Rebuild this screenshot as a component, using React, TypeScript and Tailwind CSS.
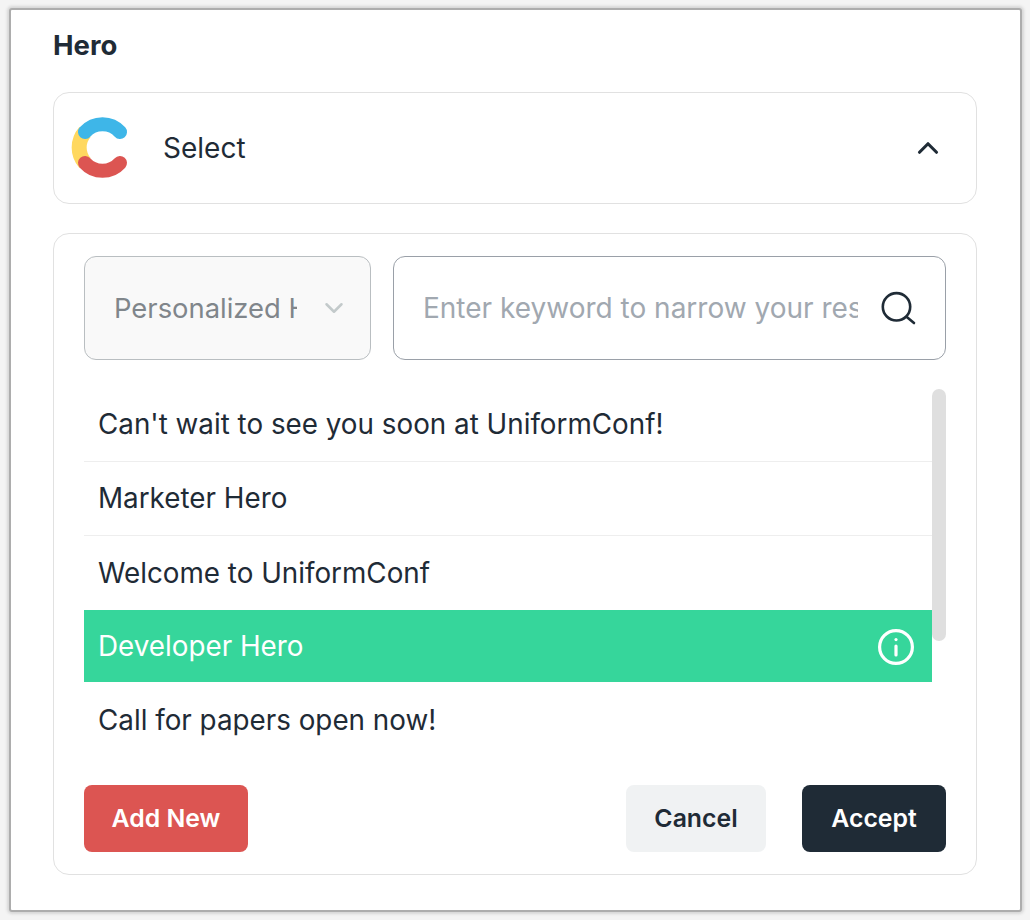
import { ChevronDown, ChevronUp } from "lucide-react";

const entries = [
  { title: "Can't wait to see you soon at UniformConf!", rowClass: "h-[74px] border-b border-[#eeeeee] pt-px" },
  { title: "Marketer Hero", rowClass: "h-[74px] border-b border-[#eeeeee]" },
  { title: "Welcome to UniformConf", rowClass: "h-[74px] pt-px" },
  { title: "Developer Hero", selected: true, rowClass: "h-[72px] justify-between bg-[#36d69b] pr-[18px] pt-[2px] text-white" },
  { title: "Call for papers open now!", rowClass: "h-[78px]" },
];

function ContentfulLogo() {
  return (
    <svg width="60" height="64" viewBox="0 -1 60 64" fill="none" className="shrink-0">
      <path d="M14 15 A23.5 23.5 0 0 0 14 46" stroke="#ffd85f" strokeWidth="15" />
      <path d="M14 15 A23.5 23.5 0 0 1 49 15" stroke="#3eb6e8" strokeWidth="14" strokeLinecap="round" />
      <path d="M14 46 A23.5 23.5 0 0 0 49 46" stroke="#dc5552" strokeWidth="14" strokeLinecap="round" />
    </svg>
  );
}

function SearchIcon() {
  return (
    <svg width="36" height="36" viewBox="0 0 36 36" fill="none" stroke="#1f2b36" strokeWidth="2.6" strokeLinecap="round">
      <circle cx="16.5" cy="16.8" r="13.7" />
      <path d="M26.8 27 L34 33" />
    </svg>
  );
}

function InfoIcon() {
  return (
    <svg width="36" height="36" viewBox="0 0 36 36" fill="none" stroke="#fff" strokeWidth="3.2" strokeLinecap="round">
      <circle cx="18" cy="18" r="16.4" />
      <path d="M18 17 V26" />
      <path d="M18 10.5 V10.6" />
    </svg>
  );
}

export default function App() {
  return (
    <div className="h-[920px] w-[1030px] overflow-hidden bg-[#f4f4f4] pl-[9px] pt-[8px] font-['Inter',sans-serif] text-[#1f2b36]">
      <div className="h-[904px] w-[1013px] rounded-[3px] border-2 border-[#adadad] bg-white pl-[42px] pr-[43px] pt-[18px] shadow-[0_0_3px_2px_#d6d6d6]">
        <h1 className="text-[27.5px] font-bold leading-[34px]">Hero</h1>

        <div className="mt-[30px] flex h-[112px] items-center rounded-2xl border border-[#e1e1e1] pl-[17px] pr-[31px]">
          <ContentfulLogo />
          <span className="ml-[32px] flex-1 pb-px text-[28px]">Select</span>
          <ChevronUp size={34} strokeWidth={2.2} />
        </div>

        <div className="mt-[29px] flex h-[642px] flex-col rounded-2xl border border-[#e1e1e1] px-[30px] pt-[22px]">
          <div className="flex h-[104px] gap-[22px]">
            <div className="flex w-[287px] items-center rounded-xl border border-[#b9bec1] bg-[#f9f9f9] pl-[29px] pr-[21px]">
              <span className="w-[183px] overflow-hidden whitespace-nowrap pt-px text-[27.4px] text-[#80868b]">Personalized Hero</span>
              <ChevronDown size={30} strokeWidth={2} className="ml-auto text-[#c3cacb]" />
            </div>
            <div className="flex flex-1 items-center rounded-xl border border-[#9aa0a8] pl-[29px] pr-[29px]">
              <span className="w-[435px] overflow-hidden whitespace-nowrap text-[28px] text-[#a1a8b0]">Enter keyword to narrow your results</span>
              <div className="ml-auto"><SearchIcon /></div>
            </div>
          </div>

          <div className="mt-[28px] flex h-[370px]">
            <ul className="w-[848px]">
              {entries.map((entry) => (
                <li key={entry.title} className={`flex items-center pl-[14px] text-[27.8px] ${entry.rowClass}`}>
                  {entry.title}
                  {entry.selected ? <InfoIcon /> : null}
                </li>
              ))}
            </ul>
            <div className="mt-px h-[252px] w-[14px] rounded-full bg-[#dfdfdf]" />
          </div>

          <div className="mt-[27px] flex h-[67px] items-stretch text-[24.8px] font-semibold">
            <button className="w-[164px] rounded-lg bg-[#dc5552] text-white">Add New</button>
            <button className="ml-auto w-[140px] rounded-lg bg-[#f0f2f3]">Cancel</button>
            <button className="ml-[36px] w-[144px] rounded-lg bg-[#1f2b36] text-white">Accept</button>
          </div>
        </div>
      </div>
    </div>
  );
}
